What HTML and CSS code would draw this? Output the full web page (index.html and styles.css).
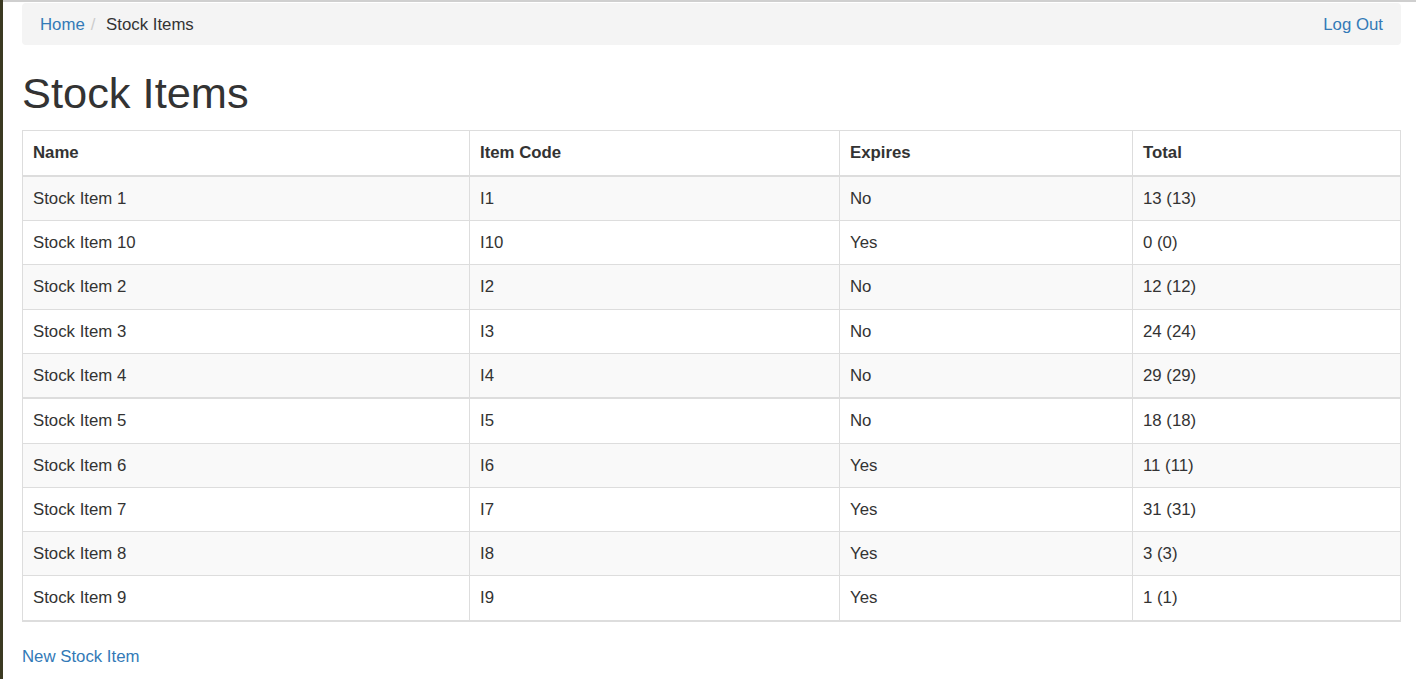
FILE: index.html
```html
<!DOCTYPE html>
<html lang="en">
<head>
<meta charset="utf-8">
<title>Stock Items</title>
<link rel="stylesheet" href="styles.css">
</head>
<body>
<div class="frame">
  <div class="strip"></div>
  <div class="page">
    <nav class="breadcrumb">
      <ol class="crumbs">
        <li><a href="#">Home</a></li>
        <li class="active">Stock Items</li>
      </ol>
      <a href="#" class="logout">Log Out</a>
    </nav>
    <h1 class="title">Stock Items</h1>
    <table class="items">
      <colgroup>
        <col class="c-name">
        <col class="c-code">
        <col class="c-exp">
        <col>
      </colgroup>
      <thead>
        <tr><th>Name</th><th>Item Code</th><th>Expires</th><th>Total</th></tr>
      </thead>
      <tbody>
        <tr><td>Stock Item 1</td><td>I1</td><td>No</td><td>13 (13)</td></tr>
        <tr><td>Stock Item 10</td><td>I10</td><td>Yes</td><td>0 (0)</td></tr>
        <tr><td>Stock Item 2</td><td>I2</td><td>No</td><td>12 (12)</td></tr>
        <tr><td>Stock Item 3</td><td>I3</td><td>No</td><td>24 (24)</td></tr>
        <tr><td>Stock Item 4</td><td>I4</td><td>No</td><td>29 (29)</td></tr>
        <tr class="thick"><td>Stock Item 5</td><td>I5</td><td>No</td><td>18 (18)</td></tr>
        <tr><td>Stock Item 6</td><td>I6</td><td>Yes</td><td>11 (11)</td></tr>
        <tr><td>Stock Item 7</td><td>I7</td><td>Yes</td><td>31 (31)</td></tr>
        <tr><td>Stock Item 8</td><td>I8</td><td>Yes</td><td>3 (3)</td></tr>
        <tr><td>Stock Item 9</td><td>I9</td><td>Yes</td><td>1 (1)</td></tr>
      </tbody>
    </table>
    <p class="actions"><a href="#">New Stock Item</a></p>
  </div>
</div>
</body>
</html>
```

FILE: styles.css
```css
html, body {
  margin: 0;
  padding: 0;
  background: #fff;
}
body {
  font-family: "Liberation Sans", Helvetica, Arial, sans-serif;
  font-size: 16.8px;
  color: #333;
}
a {
  color: #337ab7;
  text-decoration: none;
}
.frame {
  display: flex;
  min-height: 100vh;
}
.strip {
  width: 3px;
  flex: none;
  background: #3b3a22;
}
.page {
  flex: 1;
  border-top: 2px solid #cfcfcf;
  padding: 1px 15px 0 19px;
}
.breadcrumb {
  display: flex;
  justify-content: space-between;
  align-items: center;
  background: #f4f4f4;
  border-radius: 4px;
  padding: 10px 18px 8px;
  line-height: 24px;
}
.crumbs {
  list-style: none;
  margin: 0;
  padding: 0;
  display: flex;
}
.crumbs li.active {
  color: #333;
}
.crumbs li + li::before {
  content: "/\00a0";
  color: #ccc;
  padding: 0 6px;
}
.title {
  font-size: 43.4px;
  font-weight: 500;
  line-height: 1.1;
  margin: 25px 0 12px;
}
.items {
  width: 100%;
  border-collapse: collapse;
  table-layout: fixed;
  border: 1px solid #ddd;
  border-bottom-width: 2px;
}
.c-name { width: 447px; }
.c-code { width: 370px; }
.c-exp { width: 293px; }
.items th,
.items td {
  text-align: left;
  padding: 10px;
  line-height: 23.3px;
  border: 1px solid #ddd;
  vertical-align: top;
}
.items th {
  font-weight: bold;
  line-height: 24px;
  border-bottom-width: 2px;
}
.items tbody tr:nth-child(odd) {
  background: #f9f9f9;
}
.items tr.thick td {
  border-top-width: 2px;
}
.actions {
  margin: 23.5px 0 0;
  line-height: 23px;
}
```
